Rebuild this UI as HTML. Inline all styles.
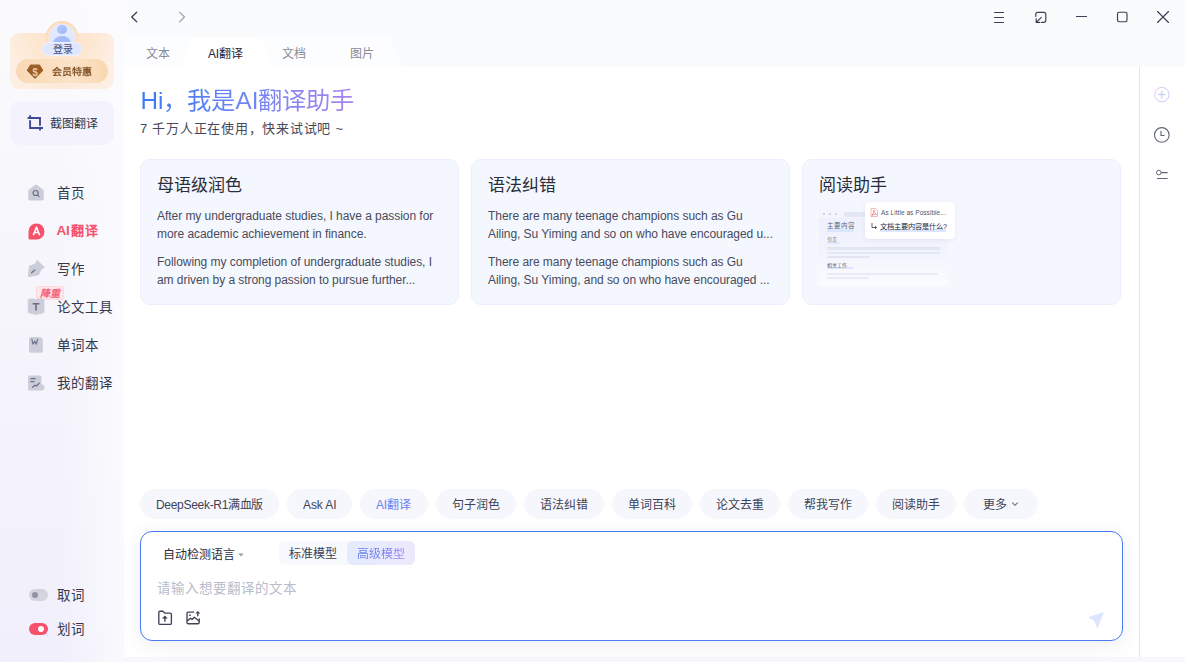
<!DOCTYPE html>
<html lang="zh-CN"><head><meta charset="utf-8">
<style>
*{box-sizing:border-box;margin:0;padding:0}
html,body{width:1185px;height:662px;overflow:hidden}
body{position:relative;font-family:"Liberation Sans",sans-serif;background:#f7f8fb;color:#2d3040}
.abs{position:absolute}
#side{left:0;top:0;width:124px;height:662px;background:linear-gradient(90deg,rgba(252,252,254,0) 0%,rgba(252,252,254,0) 50%,rgba(252,252,254,0.85) 100%),linear-gradient(180deg,#fbfbfd 0%,#f7f6fc 35%,#f1effb 100%)}
#topbar{left:124px;top:0;width:1061px;height:67px;background:#f9fbfd}
#main{left:124px;top:67px;width:1015px;height:590px;background:#fff}
#rail{left:1139px;top:67px;width:46px;height:590px;background:#fff;border-left:1px solid #e4e5f3}
.t{position:absolute;white-space:nowrap;line-height:1}
.card{top:159px;width:319px;height:146px;border-radius:10px;background:#f5f7fe;border:1px solid #eceffc}
.ct{font-size:17px;color:#2a2d3a;top:176.5px}
.cb{font-size:12px;color:#484b5c;line-height:18px;white-space:nowrap;letter-spacing:-0.05px}
.chip{position:absolute;top:489px;height:30px;border-radius:15px;background:#f6f7fd}
.cht{top:499px;font-size:12px;color:#404355}
</style></head><body>
<div id="side" class="abs"></div>
<div id="topbar" class="abs"></div>
<div id="main" class="abs"></div>
<div id="rail" class="abs"></div>

<!-- nav arrows -->
<svg class="abs" style="left:128px;top:9px" width="60" height="16" viewBox="0 0 60 16">
 <path d="M8.7 3.2 L3.7 8 L8.7 12.8" fill="none" stroke="#3a3d55" stroke-width="1.25" stroke-linecap="round" stroke-linejoin="round"/>
 <path d="M51.5 3.2 L56.5 8 L51.5 12.8" fill="none" stroke="#9a9dac" stroke-width="1.15" stroke-linecap="round" stroke-linejoin="round"/>
</svg>

<!-- window controls -->
<svg class="abs" style="left:985px;top:5px" width="200" height="25" viewBox="985 5 200 25">
 <g fill="none" stroke="#3b3e55" stroke-width="1.15" stroke-linecap="round">
  <path d="M994.5 12.5H1003.5M994.5 17.5H1003.5M994.5 22.5H1003.5"/>
  <path d="M1035.8 16.5V14.3a2 2 0 0 1 2-2h6a2 2 0 0 1 2 2v6a2 2 0 0 1-2 2h-2.3"/>
  <path d="M1041.3 17.3L1036.2 22.4M1036.2 18.8v3.6h3.6"/>
  <path d="M1076.5 16.5H1086.5"/>
  <rect x="1117.5" y="12.2" width="9.5" height="9.5" rx="1.6"/>
  <path d="M1157.5 11.5L1168.5 22.5M1168.5 11.5L1157.5 22.5"/>
 </g>
</svg>

<!-- sidebar -->
<div class="abs" style="left:10px;top:33px;width:104px;height:56px;border-radius:9px;background:radial-gradient(ellipse 60px 40px at 50% 10%,#fde2c8 0%,rgba(253,233,215,0) 100%),linear-gradient(90deg,#fdf0e4 0%,#fde9d8 50%,#fdf0e6 100%)"></div>
<div class="abs" style="left:46px;top:20.8px;width:32px;height:32px;border-radius:50%;background:linear-gradient(180deg,#fde0c2,#fde6cf);box-shadow:inset 0 0 0 1px #fcd9b8"></div>
<div class="abs" style="left:48.8px;top:23.6px;width:26.4px;height:26.4px;border-radius:50%;background:linear-gradient(180deg,#e4ecff,#dbe5fe);overflow:hidden">
  <div class="abs" style="left:8.4px;top:1.2px;width:9.6px;height:9.6px;border-radius:50%;background:linear-gradient(135deg,#b4c8fc,#9fb8fa)"></div>
  <div class="abs" style="left:4.5px;top:12.4px;width:17.4px;height:16px;border-radius:50%;background:#a3bbfb"></div>
</div>
<div class="abs" style="left:42px;top:42px;width:40px;height:14px;border-radius:7px;background:#dfe6fd;border:1px solid #eef2fe"></div>
<div class="t" style="left:52.5px;top:45px;font-size:10px;color:#434d78;font-weight:500">登录</div>
<div class="abs" style="left:16px;top:59px;width:92px;height:24px;border-radius:12px;background:linear-gradient(90deg,#f9d9b5 0%,#fbe3c8 60%,#f9d8b0 100%)"></div>
<svg class="abs" style="left:26px;top:64px" width="18" height="16" viewBox="0 0 18 16">
 <path d="M4.5 1.2H13.5L16.6 6.4L9 14.2L1.4 6.4Z" fill="#9b5e28" stroke="#9b5e28" stroke-width="1.2" stroke-linejoin="round"/>
 <text x="9" y="11.5" font-size="10" font-family="Liberation Sans" font-weight="bold" fill="#f7c68d" text-anchor="middle">$</text>
</svg>
<div class="t" style="left:52px;top:67px;font-size:10px;color:#85552a;font-weight:600;transform:scaleY(0.9);transform-origin:0 100%">会员特惠</div>

<div class="abs" style="left:10px;top:101px;width:104px;height:44px;border-radius:10px;background:#f3f2fd"></div>
<svg class="abs" style="left:24px;top:112px" width="22" height="22" viewBox="24 112 22 22">
 <g fill="none" stroke="#3f4a94" stroke-width="1.9" stroke-linecap="butt">
  <path d="M27.6 118H40V125.8"/><path d="M30.1 115.2V118"/><path d="M30.1 120.3V128H43"/><path d="M40 128V130.5"/>
 </g>
</svg>
<div class="t" style="left:50px;top:118px;font-size:12px;color:#333646">截图翻译</div>

<!-- nav -->
<svg class="abs" style="left:26px;top:182px" width="20" height="20" viewBox="26 182 20 20">
 <path d="M34.9 184.9a1.6 1.6 0 0 1 2.2 0L42.9 189.6a2 2 0 0 1 .9 1.6V198.6a1.8 1.8 0 0 1-1.8 1.8H30a1.8 1.8 0 0 1-1.8-1.8V191.2a2 2 0 0 1 .9-1.6Z" fill="#cbcdd9"/>
 <circle cx="35.6" cy="193" r="2.5" fill="none" stroke="#6a6e86" stroke-width="1.2"/>
 <path d="M37.5 194.9L39 196.4" stroke="#6a6e86" stroke-width="1.3" stroke-linecap="round"/>
</svg>
<div class="t" style="left:56.5px;top:187px;font-size:13.5px;letter-spacing:1px;color:#35384a">首页</div>

<svg class="abs" style="left:27.5px;top:223px" width="17" height="17" viewBox="0 0 17 17">
 <path d="M8.5 0.5A8 8 0 1 1 8.5 16.5H1.5A1 1 0 0 1 0.5 15.5V8.5A8 8 0 0 1 8.5 0.5Z" fill="#f6506b"/>
 <path d="M5.3 12.3L8.5 4.3L11.7 12.3M6.5 9.5H10.5" fill="none" stroke="#fff" stroke-width="1.6" stroke-linejoin="round"/>
</svg>
<div class="t" style="left:56.5px;top:224px;font-size:13.5px;color:#f5516d;font-weight:bold"><span style="letter-spacing:-0.2px">A</span><span style="letter-spacing:1.3px">I</span><span style="letter-spacing:0.9px;font-weight:600;font-size:13px">翻译</span></div>

<svg class="abs" style="left:24px;top:256px" width="24" height="24" viewBox="24 256 24 24">
 <path d="M37 260.3L44.5 267.4L41.2 269.4L38.5 275L28.2 276.7L29.4 266.1L35.6 263.8Z" fill="#cbcdd9" stroke="#cbcdd9" stroke-width="0.8" stroke-linejoin="round"/>
 <path d="M31.6 272.8L34.8 270" stroke="#6a6e86" stroke-width="1.2" stroke-linecap="round"/>
</svg>
<div class="t" style="left:56.5px;top:263px;font-size:13.5px;letter-spacing:1px;color:#35384a">写作</div>

<div class="abs" style="left:36px;top:286px;width:28px;height:14px;border-radius:3px;background:#fde6ea;border:1px solid #fcd9df"></div>
<div class="t" style="left:39.5px;top:288.5px;font-size:10px;color:#f4647b;font-style:italic;font-weight:bold">降重</div>
<svg class="abs" style="left:24px;top:296px" width="24" height="22" viewBox="24 296 24 22">
 <path d="M28.2 300a1 1 0 0 1 1-1H34.5L36 300L37.5 299H43a1 1 0 0 1 1 1V312.5L36 314.6L28.2 312.5Z" fill="#cbcdd9" stroke="#cbcdd9" stroke-width="0.8" stroke-linejoin="round"/>
 <path d="M32.6 303.7H39.4M36 303.7V310.4" stroke="#6a6e86" stroke-width="1.6"/>
</svg>
<div class="t" style="left:56.5px;top:301px;font-size:13.5px;letter-spacing:1px;color:#35384a">论文工具</div>

<svg class="abs" style="left:26px;top:334px" width="20" height="22" viewBox="26 334 20 22">
 <path d="M31 337H38.9a4 4 0 0 1 4 4V350.8a2 2 0 0 1-2 2H31a2 2 0 0 1-2-2V339a2 2 0 0 1 2-2Z" fill="#cbcdd9"/>
 <path d="M31.9 339.3L33 344.2L34.7 341.2L36.4 344.2L37.5 339.3" fill="none" stroke="#6c7087" stroke-width="1.15" stroke-linejoin="round" stroke-linecap="round"/>
</svg>
<div class="t" style="left:56.5px;top:339px;font-size:13.5px;letter-spacing:1px;color:#35384a">单词本</div>

<svg class="abs" style="left:27px;top:375px" width="18" height="16" viewBox="0 0 18 16">
 <path d="M1 2a1.5 1.5 0 0 1 1.5-1.5H13a1.5 1.5 0 0 1 1.5 1.5V9.5A3 3 0 0 1 14.5 15.5H2.5A1.5 1.5 0 0 1 1 14Z" fill="#cbcdd9"/>
 <path d="M3.8 3.6H8.3M3.8 6.6H7M5.5 12.2L7.8 10.2L9.4 10.9L12.2 8.2" fill="none" stroke="#6c7087" stroke-width="1.25" stroke-linecap="round"/>
</svg>
<div class="t" style="left:56.5px;top:377px;font-size:13.5px;letter-spacing:1px;color:#35384a">我的翻译</div>

<!-- toggles -->
<div class="abs" style="left:28.8px;top:588.8px;width:19px;height:12.4px;border-radius:6.2px;background:#d3d4de"></div>
<div class="abs" style="left:31.6px;top:591.8px;width:6.4px;height:6.4px;border-radius:50%;background:#8f92a6"></div>
<div class="t" style="left:56.5px;top:589px;font-size:13.5px;letter-spacing:1px;color:#35384a">取词</div>
<div class="abs" style="left:28.8px;top:622.8px;width:19px;height:12.4px;border-radius:6.2px;background:#f6506b"></div>
<div class="abs" style="left:37.8px;top:625.6px;width:6.6px;height:6.6px;border-radius:50%;background:#fff"></div>
<div class="t" style="left:56.5px;top:623px;font-size:13.5px;letter-spacing:1px;color:#35384a">划词</div>

<!-- tabs -->
<svg class="abs" style="left:124px;top:36px" width="300" height="31" viewBox="124 36 300 31">
 <path d="M124 67V45a8 8 0 0 1 8-8H384a8 8 0 0 1 7.5 5L400 62a8 8 0 0 0 6 5Z" fill="#fcfdfe"/>
 <path d="M182 67L190 43a8 8 0 0 1 7-6H256a8 8 0 0 1 7 6L271 67Z" fill="#ffffff"/>
</svg>
<div class="t" style="left:146px;top:47.5px;font-size:12px;color:#888b98;letter-spacing:0.2px">文本</div>
<div class="t" style="left:208px;top:47.5px;font-size:12px;color:#22253a;letter-spacing:-0.2px">AI翻译</div>
<div class="t" style="left:282px;top:47.5px;font-size:12px;color:#888b98;letter-spacing:0.2px">文档</div>
<div class="t" style="left:350px;top:47.5px;font-size:12px;color:#888b98;letter-spacing:0.2px">图片</div>

<!-- heading -->
<div class="t" style="left:140.5px;top:88px;font-size:24.3px;font-weight:500;background:linear-gradient(90deg,#3a7af3 0%,#6f86f3 50%,#a883ef 100%);-webkit-background-clip:text;background-clip:text;color:transparent;line-height:26px">Hi，我是AI翻译助手</div>
<div class="t" style="left:140px;top:122px;font-size:13px;color:#464959;letter-spacing:0.75px">7 千万人正在使用，快来试试吧 ~</div>

<!-- cards -->
<div class="abs card" style="left:140px"></div>
<div class="abs card" style="left:471px"></div>
<div class="abs card" style="left:802px"></div>

<div class="t ct" style="left:157px">母语级润色</div>
<div class="t cb" style="left:157px;top:207px">After my undergraduate studies, I have a passion for<br>more academic achievement in finance.</div>
<div class="t cb" style="left:157px;top:253px">Following my completion of undergraduate studies, I<br>am driven by a strong passion to pursue further...</div>
<div class="t ct" style="left:488px">语法纠错</div>
<div class="t cb" style="left:488px;top:207px">There are many teenage champions such as Gu<br>Ailing, Su Yiming and so on who have encouraged u...</div>
<div class="t cb" style="left:488px;top:253px">There are many teenage champions such as Gu<br>Ailing, Su Yiming, and so on who have encouraged ...</div>
<div class="t ct" style="left:819px">阅读助手</div>

<!-- reading mock -->
<div class="abs" style="left:819px;top:210px;width:129px;height:76px;border-radius:3px;background:linear-gradient(180deg,#edf0fc 0%,#f1f3fd 50%,#fbfcff 100%);overflow:hidden">
  <div class="abs" style="left:0;top:0;width:129px;height:8px;background:#f3f5fd"></div>
  <div class="abs" style="left:4px;top:3px;width:2px;height:2px;border-radius:50%;background:#c8ccdc"></div>
  <div class="abs" style="left:10px;top:3px;width:2px;height:2px;border-radius:50%;background:#c8ccdc"></div>
  <div class="abs" style="left:16px;top:3px;width:2px;height:2px;border-radius:50%;background:#c8ccdc"></div>
  <div class="abs" style="left:25px;top:1.5px;width:30px;height:5px;border-radius:3px;background:#e3e7f5"></div>
  <div class="abs" style="left:8px;top:19px;width:27px;height:3px;border-radius:2px;background:#dbe5fd"></div>
  <div class="t" style="left:8px;top:13px;font-size:6.5px;color:#606374">主要内容</div>
  <div class="abs" style="left:8px;top:32px;width:13px;height:2px;border-radius:1px;background:#dbe5fd"></div>
  <div class="t" style="left:8px;top:27px;font-size:5px;color:#5a5d6e">引言</div>
  <div class="abs" style="left:8px;top:37px;width:113px;height:2.5px;border-radius:1px;background:#e1e5f3"></div>
  <div class="abs" style="left:8px;top:41.5px;width:113px;height:2px;border-radius:1px;background:#e4e8f6"></div>
  <div class="abs" style="left:8px;top:46px;width:43px;height:2px;border-radius:1px;background:#e1e5f3"></div>
  <div class="abs" style="left:8px;top:57px;width:26px;height:2px;border-radius:1px;background:#dbe5fd"></div>
  <div class="t" style="left:8px;top:53px;font-size:5px;color:#5a5d6e">相关工作</div>
  <div class="abs" style="left:8px;top:62.5px;width:111px;height:2px;border-radius:1px;background:#e8ebf6"></div>
  <div class="abs" style="left:8px;top:67px;width:42px;height:2px;border-radius:1px;background:#e8ebf6"></div>
</div>
<div class="abs" style="left:865px;top:202px;width:90px;height:37px;border-radius:4px;background:#fff;box-shadow:0 1px 4px rgba(120,130,180,0.12)"></div>
<svg class="abs" style="left:870px;top:208px" width="8" height="9" viewBox="0 0 8 9">
 <path d="M1 0.5H5.5L7.5 2.5V8.5H1Z" fill="#fff" stroke="#f08a8a" stroke-width="0.6"/>
 <path d="M2 7.5C3 5.5 4 3.5 4 2C4 3.5 5 5.5 6.5 6.5C5 6 3 6.5 2 7.5Z" fill="none" stroke="#ea5b5b" stroke-width="0.6"/>
</svg>
<div class="t" style="left:881px;top:209.5px;font-size:6.5px;color:#55586a;letter-spacing:0.05px">As Little as Possible...</div>
<div class="abs" style="left:880px;top:229px;width:66px;height:2.5px;border-radius:1px;background:#dde6fd"></div>
<svg class="abs" style="left:870px;top:222px" width="8" height="8" viewBox="0 0 8 8">
 <path d="M2 1V5.5H6.5M5 4L6.5 5.5L5 7" fill="none" stroke="#33364a" stroke-width="0.8"/>
</svg>
<div class="t" style="left:880px;top:223px;font-size:7.2px;color:#22253a">文档主要内容是什么?</div>

<!-- chips -->
<div class="chip" style="left:140px;width:139px"></div><div class="t cht" style="left:156px;letter-spacing:-0.3px">DeepSeek-R1满血版</div>
<div class="chip" style="left:287px;width:65px"></div><div class="t cht" style="left:303px;letter-spacing:-0.1px">Ask AI</div>
<div class="chip" style="left:360px;width:68px"></div><div class="t cht" style="left:376px;color:#6a80f0;letter-spacing:-0.2px">AI翻译</div>
<div class="chip" style="left:436px;width:80px"></div><div class="t cht" style="left:452px">句子润色</div>
<div class="chip" style="left:524px;width:80px"></div><div class="t cht" style="left:540px">语法纠错</div>
<div class="chip" style="left:612px;width:80px"></div><div class="t cht" style="left:628px">单词百科</div>
<div class="chip" style="left:700px;width:80px"></div><div class="t cht" style="left:716px">论文去重</div>
<div class="chip" style="left:788px;width:80px"></div><div class="t cht" style="left:804px">帮我写作</div>
<div class="chip" style="left:876px;width:80px"></div><div class="t cht" style="left:892px">阅读助手</div>
<div class="chip" style="left:964px;width:74px"></div><div class="t cht" style="left:983px">更多</div>
<svg class="abs" style="left:1011px;top:500px" width="8" height="8" viewBox="0 0 8 8"><path d="M1.3 2.6L4 5.3L6.7 2.6" fill="none" stroke="#6a6d80" stroke-width="1.05"/></svg>

<!-- input -->
<div class="abs" style="left:140px;top:531px;width:983px;height:110px;border-radius:12px;border:1px solid #4a7bf5;background:#fff;box-shadow:0 4px 18px rgba(80,90,140,0.10)"></div>
<div class="t" style="left:163px;top:548.5px;font-size:12px;color:#2a2d3a">自动检测语言</div>
<svg class="abs" style="left:237px;top:551.5px" width="8" height="6" viewBox="0 0 8 6"><path d="M1.3 1.5H6.7L4 4.5Z" fill="#9a9cab"/></svg>
<div class="abs" style="left:279px;top:541px;width:136px;height:24px;border-radius:6px;background:#f8f9fd"></div>
<div class="abs" style="left:347px;top:541px;width:68px;height:24px;border-radius:6px;background:linear-gradient(90deg,#e4ebfd,#ede9fd)"></div>
<div class="t" style="left:289px;top:548px;font-size:12px;color:#3c3f52">标准模型</div>
<div class="t" style="left:357px;top:548px;font-size:12px;background:linear-gradient(90deg,#5a7ef1,#9a82ee);-webkit-background-clip:text;background-clip:text;color:transparent">高级模型</div>
<div class="t" style="left:157px;top:581.5px;font-size:13.5px;color:#b9bccb;letter-spacing:1.05px">请输入想要翻译的文本</div>
<svg class="abs" style="left:150px;top:603px" width="60" height="30" viewBox="150 603 60 30">
 <g fill="none" stroke="#3f4256" stroke-width="1.35" stroke-linejoin="round" stroke-linecap="round">
  <path d="M158.8 612.4a1.2 1.2 0 0 1 1.2-1.2H163l1.8 1.9H170.2a1.2 1.2 0 0 1 1.2 1.2V623.2a1.2 1.2 0 0 1-1.2 1.2H160a1.2 1.2 0 0 1-1.2-1.2Z"/>
  <path d="M164.9 618.2V621.3"/>
  <path d="M193.6 612.1H188.2a1.2 1.2 0 0 0-1.2 1.2V622.5a1.2 1.2 0 0 0 1.2 1.2H198a1.2 1.2 0 0 0 1.2-1.2V618.8"/>
  <path d="M187.5 620.6L190.5 618.2L192.1 619.5L194.3 617.2L198.8 620.8"/>
  <path d="M197.8 613.4V615.7"/>
 </g>
 <g fill="#3f4256">
  <path d="M162 618.6H167.8L164.9 615.6Z"/>
  <path d="M195.3 613.6H200.3L197.8 610.9Z"/>
  <circle cx="190" cy="615.2" r="0.9"/>
 </g>
</svg>
<svg class="abs" style="left:1088px;top:612px" width="16" height="16" viewBox="0 0 16 16">
 <path d="M15.3 0.6L0.8 5.4L6.3 8.2L9.5 15.6Z" fill="#dbe5fc" stroke="#dbe5fc" stroke-width="0.8" stroke-linejoin="round"/>
</svg>

<!-- rail icons -->
<svg class="abs" style="left:1150px;top:83px" width="24" height="104" viewBox="1150 83 24 104">
 <defs><linearGradient id="pg" x1="0" y1="0" x2="1" y2="1"><stop offset="0" stop-color="#e7a7e6"/><stop offset="1" stop-color="#9fb1fb"/></linearGradient></defs>
 <circle cx="1161.8" cy="94.6" r="7.2" fill="none" stroke="url(#pg)" stroke-width="0.9" opacity="0.75"/>
 <path d="M1161.8 90.9V98.3M1158.1 94.6H1165.5" stroke="#b3c0fb" stroke-width="0.9"/>
 <circle cx="1161.8" cy="134.9" r="7.3" fill="none" stroke="#62667a" stroke-width="1.1"/>
 <path d="M1161 130.8V135.5H1164.6" fill="none" stroke="#62667a" stroke-width="1.1"/>
 <circle cx="1158.8" cy="172.6" r="2.3" fill="none" stroke="#5f6378" stroke-width="1"/>
 <path d="M1161.1 172.6H1167.6M1157 178.5H1167.6" stroke="#5f6378" stroke-width="1.1"/>
</svg>
</body></html>
